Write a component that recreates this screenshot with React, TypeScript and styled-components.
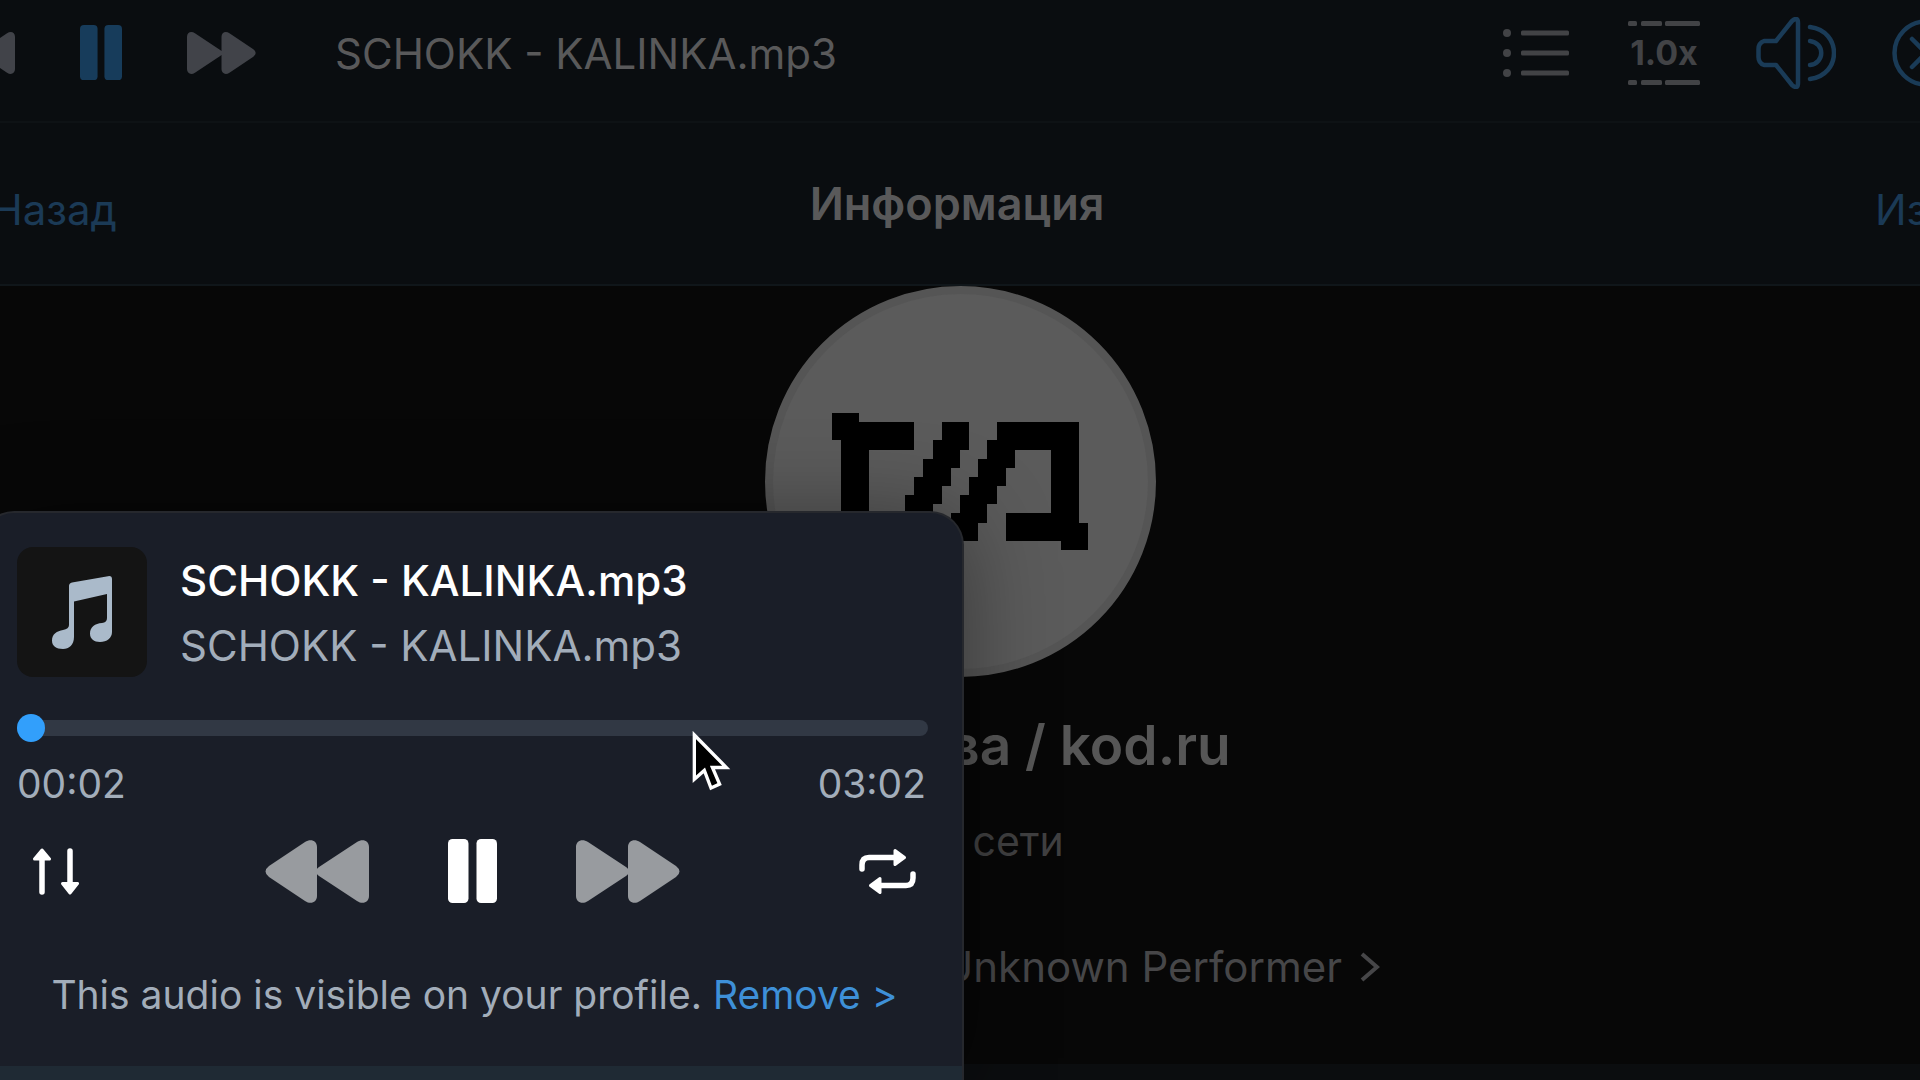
import React, { useState } from "react";
import styled, { createGlobalStyle } from "styled-components";

const Global = createGlobalStyle`
  *, *::before, *::after { box-sizing: border-box; }
  body { margin: 0; background: #070707; font-family: Inter, "Liberation Sans", sans-serif; }
  button { font: inherit; border: 0; padding: 0; background: none; cursor: pointer; }
  h1, h2, p { margin: 0; }
  svg { display: block; flex: none; }
`;

const Page = styled.div`
  position: relative;
  min-height: 100vh;
  height: 100vh;
  overflow: hidden;
  display: flex;
  flex-direction: column;
  color: #59595a;
`;

const Toolbar = styled.header`
  flex: none;
  display: flex;
  align-items: center;
  height: 123px;
  margin: 0 -54px;
  padding: 0 14px 16px 0;
  border-bottom: 2px solid #0e1215;
  background: #0a0d10;
`;

const Transport = styled.div`
  display: flex;
  align-items: center;
  gap: 65px;
`;

const IconButton = styled.button<{ $color: string }>`
  display: flex;
  align-items: center;
  justify-content: center;
  color: ${(p) => p.$color};
`;

const NowPlaying = styled.p`
  flex: 1;
  margin-left: 79px;
  padding-top: 2px;
  font-size: 42px;
  line-height: 52px;
  white-space: nowrap;
`;

const Tools = styled.div`
  display: flex;
  align-items: center;
  gap: 56px;
`;

const SpeedButton = styled.button`
  display: flex;
  flex-direction: column;
  align-items: center;
  gap: 7px;
  color: #424346;
  font-size: 34px;
  font-weight: 700;
  line-height: 40px;
`;

const NavBar = styled.nav`
  flex: none;
  display: grid;
  grid-template-columns: 171px 1fr 177px;
  align-items: center;
  height: 163px;
  margin: 0 -54px;
  border-bottom: 2px solid #10161a;
  background: #0a0d10;
`;

const NavButton = styled.button<{ $align: "start" | "end" }>`
  display: flex;
  justify-content: flex-${(p) => p.$align};
  padding: ${(p) => (p.$align === "end" ? "12px 0 0" : "12px 0 0 78px")};
  color: #1b3a56;
  font-size: 42px;
  line-height: 52px;
  white-space: nowrap;
`;

const NavTitle = styled.h1`
  font-size: 45px;
  line-height: 52px;
  font-weight: 600;
  text-align: center;
`;

const Profile = styled.main`
  flex: 1;
  display: flex;
  flex-direction: column;
  align-items: center;
  min-height: 0;
`;

const Avatar = styled.div`
  display: flex;
  align-items: center;
  justify-content: center;
  width: 391px;
  height: 391px;
  border: 8px solid #555;
  border-radius: 50%;
  background: #5b5b5b;
`;

const ProfileInfo = styled.div`
  display: flex;
  flex-direction: column;
  align-items: center;
  padding: 32px 8px 0 0;
`;

const Name = styled.h2`
  font-size: 55px;
  line-height: 72px;
  font-weight: 600;
  color: #565656;
`;

const Status = styled.p`
  margin-top: 34px;
  font-size: 41px;
  line-height: 52px;
  color: #404041;
`;

const ProfileTrack = styled.button`
  display: flex;
  align-items: center;
  justify-content: flex-end;
  gap: 18px;
  width: 848px;
  margin-top: 74px;
  font-size: 42px;
  line-height: 52px;
  color: #464648;
`;

const Footer = styled.footer`
  flex: none;
  height: 16px;
  background: #0b0d0f;
`;

const Panel = styled.section`
  position: absolute;
  left: -20px;
  top: 511px;
  bottom: 0;
  width: calc(50% + 24px);
  display: flex;
  flex-direction: column;
  border: 2px solid #26282d;
  border-bottom: 0;
  border-radius: 34px 34px 0 0;
  background: #1a1e28;
  box-shadow: 0 8px 90px rgba(0, 0, 0, 0.4);
  overflow: hidden;
`;

const PanelBody = styled.div`
  flex: 1;
  padding: 34px 34px 0 35px;
`;

const TrackRow = styled.div`
  display: flex;
  align-items: center;
  gap: 33px;
`;

const Cover = styled.div`
  display: flex;
  align-items: center;
  justify-content: center;
  width: 130px;
  height: 130px;
  border-radius: 16px;
  background: #141414;
  color: #aabaca;
`;

const TrackText = styled.div`
  display: flex;
  flex-direction: column;
  gap: 13px;
  padding-top: 2px;
  white-space: nowrap;
`;

const TrackTitle = styled.p`
  font-size: 42px;
  line-height: 52px;
  font-weight: 500;
  color: #fff;
`;

const TrackArtist = styled.p`
  font-size: 42px;
  line-height: 52px;
  color: #a2adba;
`;

const Seek = styled.input`
  display: block;
  appearance: none;
  width: 100%;
  height: 28px;
  margin: 37px 0 0;
  background: transparent;
  &::-webkit-slider-runnable-track {
    height: 16px;
    border-radius: 8px;
    background: #313844;
  }
  &::-webkit-slider-thumb {
    appearance: none;
    width: 28px;
    height: 28px;
    margin-top: -6px;
    border-radius: 50%;
    background: #329ffb;
  }
`;

const Times = styled.div`
  display: flex;
  justify-content: space-between;
  margin-top: 17px;
  padding: 0 2px 0 0;
  font-size: 39px;
  line-height: 50px;
  color: #a2adba;
`;

const Controls = styled.div`
  display: grid;
  grid-template-columns: 1fr auto 1fr;
  align-items: center;
  height: 66px;
  margin-top: 29px;
  padding: 0 12px;
`;

const MainControls = styled.div`
  display: flex;
  align-items: center;
  gap: 79px;
`;

const EdgeControl = styled(IconButton)<{ $side: "start" | "end" }>`
  justify-self: ${(p) => p.$side};
`;

const Notice = styled.p`
  margin-top: 66px;
  padding-left: 4px;
  font-size: 39px;
  line-height: 50px;
  text-align: center;
  white-space: nowrap;
  color: #a2adba;
`;

const RemoveLink = styled.a`
  color: #3e90d8;
  text-decoration: none;
`;

const PanelFooter = styled.div`
  flex: none;
  height: 14px;
  background: #1f2a34;
`;

const Pointer = styled.svg`
  position: absolute;
  left: 691px;
  top: 731px;
  pointer-events: none;
`;

function SkipIcon({ back, width, height }: { back?: boolean; width: number; height: number }) {
  return (
    <svg width={width} height={height} viewBox="0 0 104 63" preserveAspectRatio="none" fill="currentColor">
      <g transform={back ? "translate(104 0) scale(-1 1)" : undefined}>
        <path d="M0 7C0 1 6-2 12 2L50 27Q52 28.500 52 29V7C52 1 58-2 64 2L100 26Q107 31.500 100 37L64 61C58 65 52 62 52 56V34Q52 34.500 50 36L12 61C6 65 0 62 0 56Z" />
      </g>
    </svg>
  );
}

function PauseIcon({ width, height }: { width: number; height: number }) {
  return (
    <svg width={width} height={height} viewBox="0 0 49 64" preserveAspectRatio="none" fill="currentColor">
      <rect width="20.500" height="64" rx="4.500" />
      <rect x="28.500" width="20.500" height="64" rx="4.500" />
    </svg>
  );
}

function ListIcon() {
  return (
    <svg width="69" height="48" viewBox="0 0 69 48" fill="currentColor">
      {[4, 24, 44].map((y) => (
        <g key={y}>
          <circle cx="4" cy={y} r="4" />
          <rect x="18" y={y - 2.5} width="48" height="5" rx="1.500" />
        </g>
      ))}
    </svg>
  );
}

function Dashes() {
  return (
    <svg width="72" height="5" viewBox="0 0 72 5" fill="currentColor">
      <rect width="9" height="5" rx="1.500" />
      <rect x="13" width="21" height="5" rx="1.500" />
      <rect x="37" width="35" height="5" rx="1.500" />
    </svg>
  );
}

function VolumeIcon() {
  return (
    <svg width="80" height="72" viewBox="0 0 80 72" fill="none" stroke="currentColor" strokeWidth="4.500" strokeLinecap="round" strokeLinejoin="round">
      <path d="M8 24H20L36 4Q42-1 42 6V66Q42 73 36 68L20 48H8Q2.500 46 2.500 40V32Q2.500 26 8 24Z" />
      <path d="M54 24C69 26 69 46 54 48" />
      <path d="M54 10C86 14 86 58 54 62" />
    </svg>
  );
}

function CloseIcon() {
  return (
    <svg width="68" height="68" viewBox="0 0 68 68" fill="none" stroke="currentColor" strokeWidth="4.500" strokeLinecap="round">
      <circle cx="34" cy="34" r="31.500" />
      <path d="M20 20L48 48M48 20L20 48" />
    </svg>
  );
}

function NoteIcon() {
  return (
    <svg width="60" height="73" viewBox="0 0 60 73" fill="currentColor">
      <path d="M17 10Q17 7 20 6.500L56 .2Q60-.5 60 3V56C60 62 55 66 48 66C42 66 38 63 38 57.500C38 51 43 47.500 50 47Q55 46.500 55 42V18L22 25.500V61C22 69 17 73 11 73C4 73 0 70 0 64.500C0 58 5 55 11 54Q17 53 17 49Z" />
    </svg>
  );
}

function ShuffleIcon() {
  return (
    <svg width="51" height="47" viewBox="-3 0 51 47" fill="currentColor" stroke="currentColor" strokeLinejoin="round" strokeLinecap="round">
      <path d="M10 10V44M38 3V36" strokeWidth="5.500" />
      <path d="M10 2L17.500 11H2.500ZM38 45L45.500 35.500H30.500Z" strokeWidth="3" />
    </svg>
  );
}

function RepeatIcon() {
  return (
    <svg width="57" height="47" viewBox="0 0 57 47" fill="currentColor" stroke="currentColor" strokeLinejoin="round" strokeLinecap="round">
      <path d="M3 21V17Q3 9.500 10 9.500H36M54 26V30Q54 37.500 47 37.500H21" fill="none" strokeWidth="5.500" />
      <path d="M36 2.500L45.500 9.500L36 16.500ZM21 30.500L11.500 37.500L21 44.500Z" strokeWidth="3" />
    </svg>
  );
}

function BrandMark() {
  const steps = [0, 1, 2, 3, 4, 5];
  return (
    <svg width="256" height="137" viewBox="0 0 28 15" preserveAspectRatio="none" fill="#000" shapeRendering="crispEdges">
      <path d="M0 0H3V1H9V4H4V14H1V3H0Z" />
      {steps.map((i) => (
        <rect key={`a${i}`} x={12 - i} y={1 + 2 * i} width="3" height="3" />
      ))}
      {steps.map((i) => (
        <rect key={`b${i}`} x={18 - i} y={1 + 2 * i} width="3" height="3" />
      ))}
      <path d="M18 1H27V12H28V15H25V14H19V11H24V4H18Z" />
    </svg>
  );
}

export default function App() {
  const [position, setPosition] = useState(0);
  const track = "SCHOKK - KALINKA.mp3";
  return (
    <Page>
      <Global />
      <Toolbar>
        <Transport>
          <IconButton $color="#414349" aria-label="Previous"><SkipIcon back width={69} height={42} /></IconButton>
          <IconButton $color="#173c5b" aria-label="Pause"><PauseIcon width={42} height={55} /></IconButton>
          <IconButton $color="#414349" aria-label="Next"><SkipIcon width={69} height={42} /></IconButton>
        </Transport>
        <NowPlaying>{track}</NowPlaying>
        <Tools>
          <IconButton $color="#424346" aria-label="Playlist"><ListIcon /></IconButton>
          <SpeedButton>
            <Dashes />
            1.0x
            <Dashes />
          </SpeedButton>
          <IconButton $color="#1a3b57" aria-label="Volume"><VolumeIcon /></IconButton>
          <IconButton $color="#1a3b57" aria-label="Close"><CloseIcon /></IconButton>
        </Tools>
      </Toolbar>
      <NavBar>
        <NavButton $align="end">Назад</NavButton>
        <NavTitle>Информация</NavTitle>
        <NavButton $align="start">Изм.</NavButton>
      </NavBar>
      <Profile>
        <Avatar><BrandMark /></Avatar>
        <ProfileInfo>
          <Name>Код Дурова / kod.ru</Name>
          <Status>был в сети</Status>
          <ProfileTrack>
            <span>Unknown Performer</span>
            <svg width="20" height="30" viewBox="0 0 20 30" fill="none" stroke="currentColor" strokeWidth="4">
              <path d="M2 2L17 15L2 28" />
            </svg>
          </ProfileTrack>
        </ProfileInfo>
      </Profile>
      <Footer />
      <Panel aria-label="Player">
        <PanelBody>
          <TrackRow>
            <Cover><NoteIcon /></Cover>
            <TrackText>
              <TrackTitle>{track}</TrackTitle>
              <TrackArtist>{track}</TrackArtist>
            </TrackText>
          </TrackRow>
          <Seek type="range" min={0} max={182} value={position} aria-label="Position" onChange={(e) => setPosition(Number(e.target.value))} />
          <Times>
            <span>00:02</span>
            <span>03:02</span>
          </Times>
          <Controls>
            <EdgeControl $side="start" $color="#fff" aria-label="Order"><ShuffleIcon /></EdgeControl>
            <MainControls>
              <IconButton $color="#989b9f" aria-label="Previous track"><SkipIcon back width={104} height={63} /></IconButton>
              <IconButton $color="#fff" aria-label="Pause track"><PauseIcon width={49} height={64} /></IconButton>
              <IconButton $color="#989b9f" aria-label="Next track"><SkipIcon width={104} height={63} /></IconButton>
            </MainControls>
            <EdgeControl $side="end" $color="#fff" aria-label="Repeat"><RepeatIcon /></EdgeControl>
          </Controls>
          <Notice>
            This audio is visible on your profile. <RemoveLink href="#remove">Remove &gt;</RemoveLink>
          </Notice>
        </PanelBody>
        <PanelFooter />
      </Panel>
      <Pointer width="40" height="61" viewBox="0 0 42 62" preserveAspectRatio="none" aria-hidden="true">
        <path d="M3.500 4V49L14 40L21 58L30 54L22.500 37H37Z" fill="#000" stroke="#fff" strokeWidth="3.500" strokeLinejoin="miter" />
      </Pointer>
    </Page>
  );
}
